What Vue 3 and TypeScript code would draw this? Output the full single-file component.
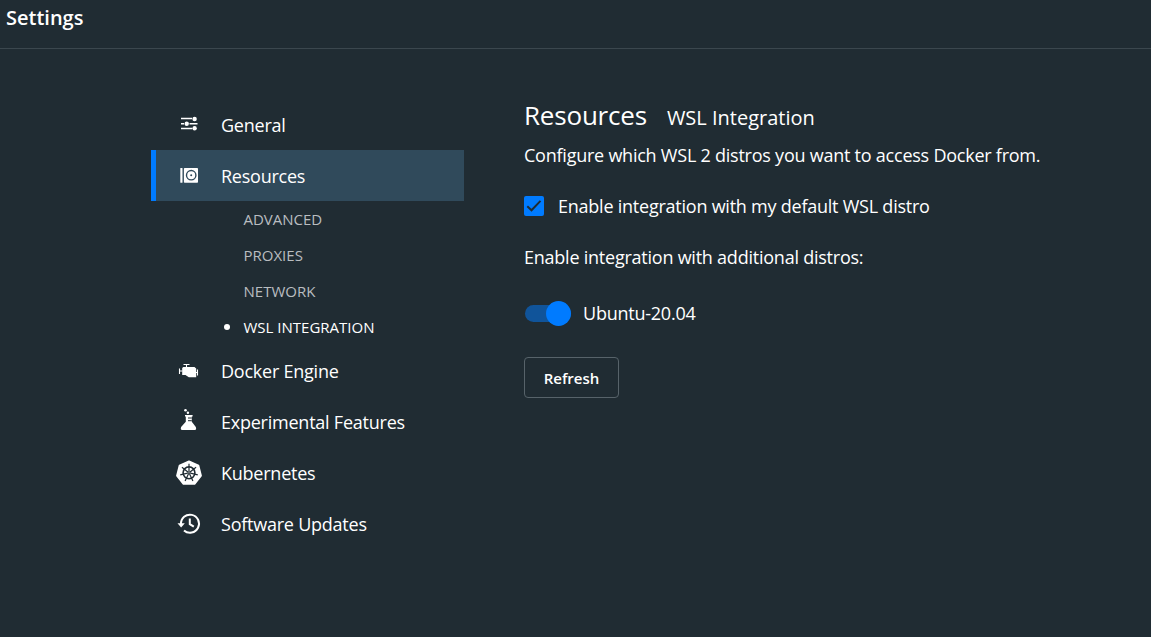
<script setup lang="ts">
import { ref } from 'vue'

interface NavItem {
  id: string
  label: string
  children?: string[]
}

const items: NavItem[] = [
  { id: 'general', label: 'General' },
  { id: 'resources', label: 'Resources', children: ['ADVANCED', 'PROXIES', 'NETWORK', 'WSL INTEGRATION'] },
  { id: 'engine', label: 'Docker Engine' },
  { id: 'experimental', label: 'Experimental Features' },
  { id: 'kubernetes', label: 'Kubernetes' },
  { id: 'updates', label: 'Software Updates' },
]

const activeItem = ref('resources')
const activeChild = ref('WSL INTEGRATION')
const useDefault = ref(true)
const ubuntu = ref(true)
const spokes = Array.from({ length: 7 }, (_, i) => (i * 360) / 7)
</script>

<template>
  <div class="window">
    <header class="header">Settings</header>
    <div class="content">
      <nav class="nav">
        <template v-for="item in items" :key="item.id">
          <div class="item" :class="{ active: item.id === activeItem }" @click="activeItem = item.id">
            <svg class="icon" width="30" height="51" viewBox="0 0 30 51" fill="#fff">
              <g v-if="item.id === 'general'">
                <path d="M7 19.5h11M7 24.800h3M15.500 24.800H23.500M7 29.500h11" stroke="#fff" stroke-width="1.400" fill="none" />
                <circle cx="20.600" cy="20" r="2.200" />
                <circle cx="12.700" cy="24.800" r="2.200" />
                <circle cx="20.600" cy="29.200" r="2.200" />
              </g>
              <g v-else-if="item.id === 'resources'">
                <rect x="6.300" y="18" width="2.200" height="14.700" rx="0.500" />
                <rect x="9.900" y="18" width="14.100" height="14.700" rx="0.800" />
                <circle cx="17.200" cy="25.200" r="4.700" fill="none" stroke="#304a5b" stroke-width="1.400" />
                <circle cx="17.200" cy="25.200" r="1" fill="#304a5b" />
              </g>
              <g v-else-if="item.id === 'engine'">
                <path d="M9.300 22h11.200l1.700 1.500v8.700H14.800L11.500 30H8.200V23z" />
                <path d="M9.500 19.500h6M12.500 19.500v3M5.500 23.500v5.500M5.500 26h3M23.500 24.500v6M22 27.500h2" fill="none" stroke="#fff" stroke-width="1.100" />
              </g>
              <g v-else-if="item.id === 'experimental'">
                <circle cx="11.500" cy="14.200" r="1.300" />
                <circle cx="13.900" cy="16.800" r="1.200" />
                <path d="M11 19h7.600v1.500h-.8v5.300L21.800 31q1 2.900-1 2.900H8.100q-2 0-1-2.900l4.700-5.200v-5.300H11z" />
                <path d="M14 22h3.800M14 24.700h3.800" stroke="#202c33" stroke-width="1" />
              </g>
              <g v-else-if="item.id === 'kubernetes'">
                <path d="M15 14.200 24.500 18.500 27.100 28.700 20.600 37H9.400L2.900 28.700 5.500 18.500z" stroke="#fff" stroke-width="1.600" stroke-linejoin="round" />
                <g fill="none" stroke="#202c33">
                  <circle cx="15" cy="25.800" r="5.900" stroke-width="1.600" />
                  <path v-for="a in spokes" :key="a" d="M15 24.400V16.800" stroke-width="1.200" :transform="`rotate(${a} 15 25.8)`" />
                </g>
                <circle cx="15" cy="25.800" r="1.600" fill="#202c33" />
                <circle cx="15" cy="25.800" r="0.600" />
              </g>
              <g v-else>
                <path d="M7 26.200A9 9 0 1 1 10 32.400M15.800 20.500v5.700l4 2.500" fill="none" stroke="#fff" stroke-width="2" />
                <path d="M3.500 25.200h7.300l-3.650 4.300z" />
              </g>
            </svg>
            <span>{{ item.label }}</span>
          </div>
          <div
            v-for="child in item.children"
            :key="child"
            class="child"
            :class="{ selected: child === activeChild }"
            @click="activeChild = child"
          >
            <i class="bullet"></i><span>{{ child }}</span>
          </div>
        </template>
      </nav>
      <main class="panel">
        <h1 class="title"><span>Resources</span><small>WSL Integration</small></h1>
        <p class="description">Configure which WSL 2 distros you want to access Docker from.</p>
        <div class="check-row" @click="useDefault = !useDefault">
          <span class="checkbox">
            <svg v-if="useDefault" width="20" height="20" viewBox="0 0 20 20">
              <path d="M3.300 10.300 7.500 14.300 16.500 4.900" fill="none" stroke="#202c33" stroke-width="2" />
            </svg>
          </span>
          <span>Enable integration with my default WSL distro</span>
        </div>
        <p class="additional">Enable integration with additional distros:</p>
        <div class="toggle-row" @click="ubuntu = !ubuntu">
          <span class="track" :class="{ on: ubuntu }"><i class="knob"></i></span>
          <span>Ubuntu-20.04</span>
        </div>
        <button class="refresh" type="button">Refresh</button>
      </main>
    </div>
  </div>
</template>

<style>
body {
  background: #202c33;
}
</style>

<style scoped>
.window {
  box-sizing: border-box;
  height: 637px;
  overflow: hidden;
  background: #202c33;
  color: #fff;
  font: 18px/26px "Open Sans", sans-serif;
  letter-spacing: -0.235px;
}
.header {
  box-sizing: border-box;
  height: 49px;
  padding: 5px 6px;
  border-bottom: 1px solid #3b474e;
  font-size: 20px;
  font-weight: 600;
  letter-spacing: 0;
}
.content {
  display: flex;
  gap: 60px;
  padding: 50px 0 0 151px;
}
.nav {
  width: 313px;
}
.item {
  box-sizing: border-box;
  display: flex;
  align-items: center;
  height: 51px;
  padding-left: 18px;
  border-left: 5px solid transparent;
}
.item.active {
  background: #304a5b;
  border-left-color: #007bff;
}
.icon {
  flex: none;
  margin-right: 17px;
}
.child {
  display: flex;
  align-items: center;
  height: 36px;
  padding-left: 72.5px;
  color: #b9bdc0;
  font-size: 15px;
  letter-spacing: 0;
}
.bullet {
  width: 6px;
  height: 6px;
  margin-right: 14px;
  border-radius: 50%;
}
.selected {
  color: #fff;
}
.selected .bullet {
  background: #fff;
}
.title {
  display: flex;
  align-items: baseline;
  gap: 20px;
  margin: -1px 0 0;
  font-size: 26px;
  font-weight: 400;
  line-height: 34px;
  letter-spacing: -0.2px;
}
.title small {
  font-size: 20px;
  letter-spacing: 0;
}
.description {
  margin: 7px 0 0;
}
.check-row {
  display: flex;
  align-items: center;
  gap: 14px;
  height: 26px;
  margin-top: 25px;
}
.checkbox {
  width: 20px;
  height: 20px;
  border-radius: 2px;
  background: #007bff;
}
.checkbox svg {
  display: block;
}
.additional {
  margin: 25px 0 0;
}
.toggle-row {
  display: flex;
  align-items: center;
  gap: 12px;
  height: 26px;
  margin: 30px 0 0 1px;
}
.track {
  display: flex;
  align-items: center;
  width: 46px;
  height: 17px;
  border-radius: 9px;
  background: #59646a;
}
.track.on {
  justify-content: flex-end;
  background: #10549a;
}
.knob {
  width: 25px;
  height: 25px;
  border-radius: 50%;
  background: #007bff;
}
.refresh {
  display: block;
  width: 95px;
  height: 41px;
  margin-top: 31px;
  padding: 0;
  border: 1px solid #57636a;
  border-radius: 4px;
  background: transparent;
  color: #fff;
  font: 600 15px/20px "Open Sans", sans-serif;
}
</style>
